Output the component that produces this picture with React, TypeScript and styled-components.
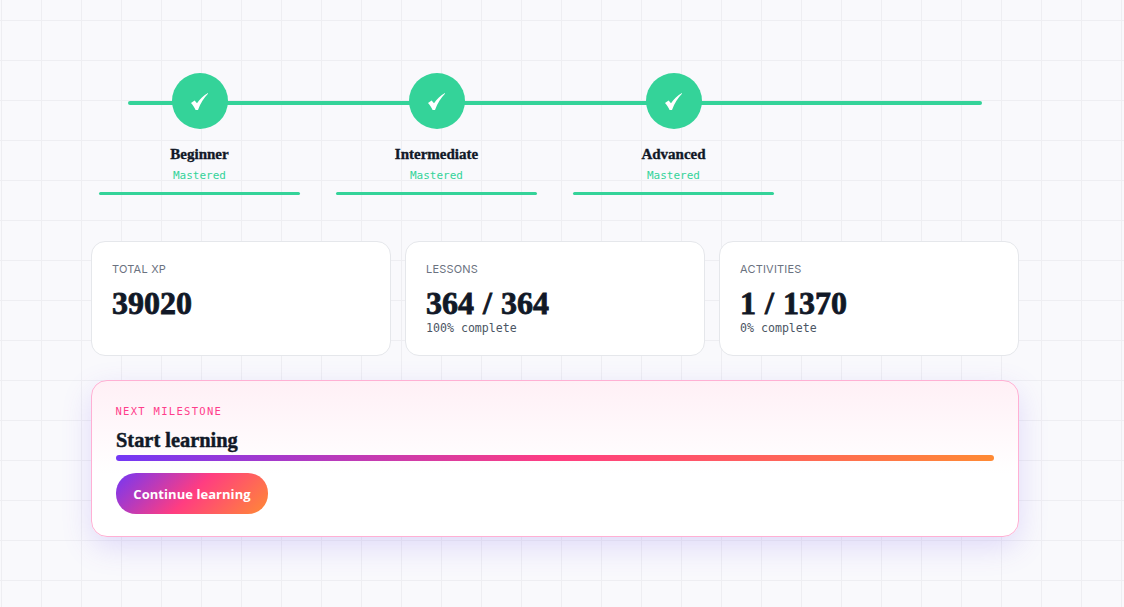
import React from 'react'
import { styled, createGlobalStyle } from 'styled-components'

const GlobalStyle = createGlobalStyle`
  html, body {
    margin: 0;
    padding: 0;
    height: 100%;
    overflow: hidden;
  }
  body {
    font-family: "Inter", "Liberation Sans", sans-serif;
    background-color: #f9f9fc;
    background-image:
      linear-gradient(to right, #eeeef2 1px, transparent 1px),
      linear-gradient(to bottom, #eeeef2 1px, transparent 1px);
    background-size: 40px 40px;
    background-position: 1px 20px;
  }
`

const steps = ['Beginner', 'Intermediate', 'Advanced']

const stats = [
  { label: 'Total XP', value: '39020', note: '' },
  { label: 'Lessons', value: '364 / 364', note: '100% complete' },
  { label: 'Activities', value: '1 / 1370', note: '0% complete' },
]

const Check = () => (
  <svg width="17" height="17" viewBox="0 0 17 17" aria-hidden="true">
    <path d="M0 10 L3.6 7.4 L6 10.2 C8.8 6 12.6 2.6 17 0 L17 .8 C13 4.6 9.6 10 7 17 L4.6 17 C3.4 14.4 1.8 12 0 10 Z" fill="#fff" />
  </svg>
)

const App = () => {
  return (
    <Page>
      <GlobalStyle />
      <Track>
        <Line />
        {steps.map((name) => (
          <Step key={name}>
            <Circle>
              <Check />
            </Circle>
            <StepName>{name}</StepName>
            <StepStatus>Mastered</StepStatus>
            <StepBar />
          </Step>
        ))}
      </Track>
      <Stats>
        {stats.map((s) => (
          <Card key={s.label}>
            <CardLabel>{s.label}</CardLabel>
            <CardValue>{s.value}</CardValue>
            {s.note && <CardNote>{s.note}</CardNote>}
          </Card>
        ))}
      </Stats>
      <Milestone>
        <MilestoneLabel>Next milestone</MilestoneLabel>
        <MilestoneTitle>Start learning</MilestoneTitle>
        <Progress />
        <Continue>Continue learning</Continue>
      </Milestone>
    </Page>
  )
}

export default App

const Page = styled.div`
  width: 928px;
  margin-left: 91px;
  padding-top: 73px;
`

const Track = styled.div`
  position: relative;
  display: grid;
  grid-template-columns: repeat(3, 201px);
  column-gap: 36px;
  padding-left: 8px;
`

const Line = styled.div`
  position: absolute;
  left: 37px;
  top: 28px;
  width: 854px;
  height: 4px;
  border-radius: 2px;
  background: #34d399;
`

const Step = styled.div`
  position: relative;
  display: flex;
  flex-direction: column;
  align-items: center;
`

const Circle = styled.div`
  width: 56px;
  height: 56px;
  border-radius: 50%;
  background: #34d399;
  display: flex;
  align-items: center;
  justify-content: center;
`

const StepName = styled.div`
  margin-top: 16px;
  font-family: "Liberation Serif", serif;
  font-weight: 700;
  font-size: 15px;
  line-height: 18px;
  color: #111827;
  -webkit-text-stroke: 0.35px #111827;
`

const StepStatus = styled.div`
  margin-top: 5px;
  font-family: "DejaVu Sans Mono", "Liberation Mono", monospace;
  font-size: 11px;
  line-height: 15px;
  color: #34d399;
`

const StepBar = styled.div`
  margin-top: 9px;
  width: 100%;
  height: 3px;
  border-radius: 2px;
  background: #34d399;
`

const Stats = styled.div`
  margin-top: 46px;
  display: grid;
  grid-template-columns: repeat(3, 300px);
  column-gap: 14px;
`

const Card = styled.div`
  box-sizing: border-box;
  height: 115px;
  padding: 20px;
  background: #fff;
  border: 1px solid #e5e7eb;
  border-radius: 14px;
`

const CardLabel = styled.div`
  font-size: 11px;
  line-height: 15px;
  letter-spacing: 0.2px;
  text-transform: uppercase;
  color: #6b7280;
`

const CardValue = styled.div`
  margin-top: 10px;
  font-family: "Liberation Serif", serif;
  font-weight: 700;
  font-size: 32px;
  line-height: 32px;
  word-spacing: 1px;
  color: #111827;
  -webkit-text-stroke: 0.8px #111827;
`

const CardNote = styled.div`
  margin-top: 2px;
  font-family: "DejaVu Sans Mono", "Liberation Mono", monospace;
  font-size: 11.6px;
  line-height: 15px;
  color: #4b5563;
`

const Milestone = styled.div`
  box-sizing: border-box;
  margin-top: 24px;
  height: 157px;
  padding: 24px;
  border: 1px solid #ffb0d4;
  border-radius: 16px;
  background: linear-gradient(180deg, #fff0f6 0%, #ffffff 60%);
  box-shadow: 0 10px 30px rgba(109, 80, 240, 0.18);
`

const MilestoneLabel = styled.div`
  margin-left: -0.5px;
  font-family: "DejaVu Sans Mono", "Liberation Mono", monospace;
  font-size: 10.5px;
  line-height: 12px;
  letter-spacing: 1.3px;
  text-transform: uppercase;
  color: #ff3d8b;
`

const MilestoneTitle = styled.div`
  margin-top: 11px;
  font-family: "Liberation Serif", serif;
  font-weight: 700;
  font-size: 20.4px;
  line-height: 24px;
  color: #111827;
  -webkit-text-stroke: 0.45px #111827;
`

const Progress = styled.div`
  margin-top: 3px;
  height: 6px;
  border-radius: 3px;
  background: linear-gradient(90deg, #7337f5 0%, #ff3d81 50%, #ff8a34 100%);
`

const Continue = styled.button`
  display: block;
  margin-top: 12px;
  width: 152px;
  height: 41px;
  padding: 0;
  border: none;
  border-radius: 20px;
  background: linear-gradient(135deg, #7337f5 0%, #ff3d81 50%, #ff8a34 100%);
  color: #fff;
  font-family: "Open Sans", "Noto Sans", sans-serif;
  font-weight: 700;
  font-size: 13px;
  letter-spacing: 0.05px;
`
